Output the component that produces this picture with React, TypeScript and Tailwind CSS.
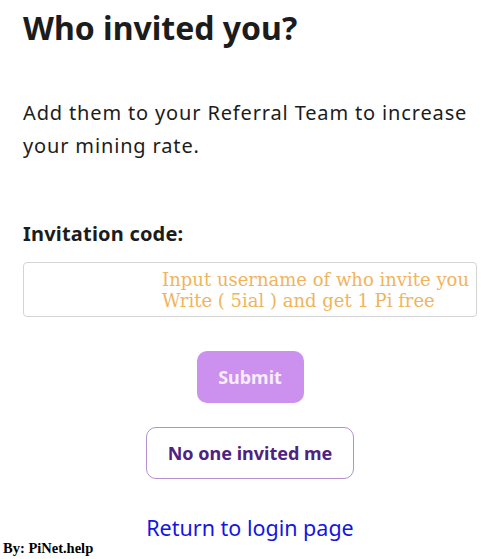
import React from "react";

export default function App() {
  return (
    <div className="relative w-[500px] h-[559px] bg-white overflow-hidden" style={{ fontFamily: '"Noto Sans", sans-serif' }}>
      <div className="px-[23px] pt-[6px] flex flex-col">
        <h1 className="text-[32px] leading-[44px] font-bold text-[#1c1c1c]">Who invited you?</h1>
        <p className="mt-[46px] text-[20px] leading-[33px] tracking-[0.85px] text-[#1c1c1c]">
          Add them to your Referral Team to increase your mining rate.
        </p>
        <label className="mt-[58px] text-[20px] leading-[28px] font-bold tracking-[0.2px] text-[#1c1c1c]">Invitation code:</label>
        <div className="mt-[14px] h-[55px] border border-[#d4d4d4] rounded-[4px] flex flex-col items-end justify-center pr-[7px]">
          <div className="text-[18px] leading-[21px] text-[#f0b45c] text-left" style={{ fontFamily: '"DejaVu Serif", serif' }}>
            <div>Input username of who invite you</div>
            <div>Write ( 5ial ) and get 1 Pi free</div>
          </div>
        </div>
        <div className="flex flex-col items-center">
          <button className="mt-[34px] w-[107px] h-[52px] rounded-[10px] bg-[#cc90ee] text-[#f6eefc] text-[18px] font-bold">
            Submit
          </button>
          <button className="mt-[24px] w-[208px] h-[52px] rounded-[10px] border border-[#b58fcf] bg-white text-[#4f2280] text-[18px] font-bold">
            No one invited me
          </button>
          <a className="mt-[35px] text-[21.5px] leading-[28px] text-[#1515e0]">Return to login page</a>
        </div>
      </div>
      <div className="absolute left-[3px] top-[538px] text-[14.5px] font-bold text-black" style={{ fontFamily: '"Liberation Serif", serif' }}>
        By: PiNet.help
      </div>
    </div>
  );
}
